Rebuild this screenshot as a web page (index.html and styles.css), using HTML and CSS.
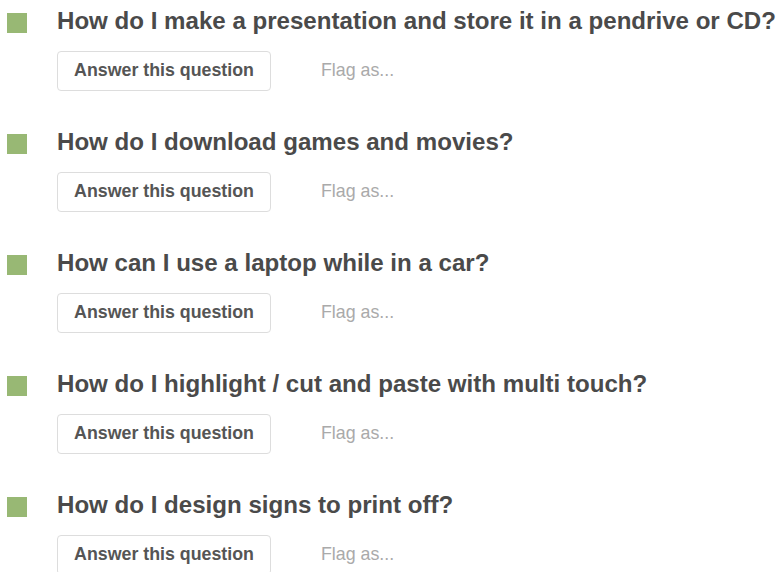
FILE: index.html
```html
<!DOCTYPE html>
<html lang="en">
<head>
<meta charset="utf-8">
<title>Questions</title>
<link rel="stylesheet" href="styles.css">
</head>
<body>
<ul class="questions">
  <li class="question">
    <span class="marker"></span>
    <div class="body">
      <h3 class="title">How do I make a presentation and store it in a pendrive or CD?</h3>
      <div class="actions">
        <button class="answer-btn">Answer this question</button>
        <span class="flag">Flag as...</span>
      </div>
    </div>
  </li>
  <li class="question">
    <span class="marker"></span>
    <div class="body">
      <h3 class="title">How do I download games and movies?</h3>
      <div class="actions">
        <button class="answer-btn">Answer this question</button>
        <span class="flag">Flag as...</span>
      </div>
    </div>
  </li>
  <li class="question">
    <span class="marker"></span>
    <div class="body">
      <h3 class="title">How can I use a laptop while in a car?</h3>
      <div class="actions">
        <button class="answer-btn">Answer this question</button>
        <span class="flag">Flag as...</span>
      </div>
    </div>
  </li>
  <li class="question">
    <span class="marker"></span>
    <div class="body">
      <h3 class="title">How do I highlight / cut and paste with multi touch?</h3>
      <div class="actions">
        <button class="answer-btn">Answer this question</button>
        <span class="flag">Flag as...</span>
      </div>
    </div>
  </li>
  <li class="question">
    <span class="marker"></span>
    <div class="body">
      <h3 class="title">How do I design signs to print off?</h3>
      <div class="actions">
        <button class="answer-btn">Answer this question</button>
        <span class="flag">Flag as...</span>
      </div>
    </div>
  </li>
</ul>
</body>
</html>
```
FILE: styles.css
```css
html, body {
  margin: 0;
  padding: 0;
  background: #fff;
}
body {
  font-family: "Liberation Sans", Arial, sans-serif;
  overflow: hidden;
  height: 572px;
}
.questions {
  list-style: none;
  margin: 0;
  padding: 0;
}
.question {
  display: flex;
  align-items: flex-start;
  height: 121px;
  padding-top: 7px;
  box-sizing: border-box;
}
.marker {
  flex: none;
  width: 20px;
  height: 20px;
  margin-left: 7px;
  margin-top: 6px;
  background: #98b874;
}
.body {
  margin-left: 31px;
  white-space: nowrap;
}
.title {
  margin: 0 0 16px -1px;
  font-size: 24.1px;
  line-height: 28px;
  font-weight: bold;
  color: #4a4a4a;
}
.actions {
  display: flex;
  align-items: center;
  margin-left: -1px;
}
.answer-btn {
  font-family: inherit;
  font-size: 17.8px;
  font-weight: bold;
  color: #555;
  background: #fff;
  border: 1px solid #ddd;
  border-radius: 4px;
  width: 214px;
  height: 40px;
  padding: 0 0 2px 0;
  box-sizing: border-box;
  line-height: 20px;
  text-align: center;
}
.flag {
  margin-left: 50px;
  font-size: 17.8px;
  color: #aaa;
  line-height: 20px;
  padding-bottom: 2px;
}
```
